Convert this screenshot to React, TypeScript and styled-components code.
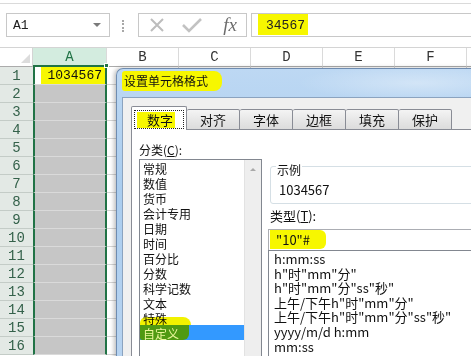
import React from "react";
import styled, { createGlobalStyle } from "styled-components";

const CJK = `"Noto Sans CJK SC", "Noto Sans", sans-serif`;
const MONO = `"Liberation Mono", "Noto Sans CJK SC", monospace`;
const GREEN = "#217346";

const GlobalStyle = createGlobalStyle`
  * { box-sizing: border-box; }
  html, body {
    margin: 0;
    padding: 0;
    background: #ffffff;
    overflow: hidden;
  }
`;

const Page = styled.div`
  width: 471px;
  height: 356px;
  overflow: hidden;
  background: #ffffff;
`;

/* ---------- formula bar ---------- */

const Toolbar = styled.div`
  margin-top: 3px;
  height: 45px;
  border-top: 1px solid #dadada;
  border-bottom: 1px solid #d4d4d4;
  display: flex;
  align-items: flex-start;
  padding-top: 9px;
`;

const NameBox = styled.div`
  margin-left: 6px;
  width: 104px;
  height: 24px;
  border: 1px solid #c8c8c8;
  display: flex;
  align-items: center;
  padding: 0 8px 0 6px;
  font: 13px ${MONO};
  color: #222;
`;

const Caret = styled.span`
  margin-left: auto;
  width: 0;
  height: 0;
  border-left: 4px solid transparent;
  border-right: 4px solid transparent;
  border-top: 4px solid #7a7a7a;
`;

const Grip = styled.div`
  margin: 7px 0 0 12px;
  width: 2px;
  height: 12px;
  border-left: 2px dotted #a8a8a8;
`;

const FxBox = styled.div`
  margin-left: 14px;
  width: 109px;
  height: 24px;
  border: 1px solid #c8c8c8;
  display: grid;
  grid-template-columns: repeat(3, 1fr);
  align-items: center;
  justify-items: center;
`;

const Fx = styled.span`
  font: italic 19px "Liberation Serif", "DejaVu Serif", serif;
  color: #6d6d6d;
  line-height: 22px;
  margin-left: 4px;
`;

const FormulaInput = styled.div`
  margin-left: 4px;
  flex: 1;
  height: 24px;
  border: 1px solid #c8c8c8;
  border-right: none;
  padding-left: 6px;
  display: flex;
  align-items: flex-start;
`;

const Mark = styled.span<{ $pad?: string }>`
  display: inline-block;
  background: #f7f700;
  padding: ${(p) => p.$pad || "0 4px"};
`;

const FormulaMark = styled(Mark)`
  font: 13px ${MONO};
  line-height: 18px;
  color: #222;
`;

/* ---------- sheet ---------- */

const Sheet = styled.div`
  position: relative;
  display: grid;
  grid-template-columns: 33px 74px repeat(6, 72px);
  grid-template-rows: 19px;
  grid-auto-rows: 18px;
`;

const Corner = styled.div`
  border-right: 1px solid #d4d4d4;
  border-bottom: 1px solid #ababab;
  display: flex;
  align-items: flex-end;
  justify-content: flex-end;
  padding: 0 2px 3px 0;
`;

const CornerTri = styled.span`
  width: 0;
  height: 0;
  border-left: 9px solid transparent;
  border-bottom: 9px solid #dcdcdc;
`;

const ColHead = styled.div<{ $active?: boolean }>`
  display: flex;
  align-items: center;
  justify-content: center;
  font: 14px ${MONO};
  color: ${(p) => (p.$active ? GREEN : "#333")};
  background: ${(p) => (p.$active ? "#d3ecdf" : "#ffffff")};
  border-right: 1px solid #dadada;
  border-bottom: ${(p) => (p.$active ? `2px solid ${GREEN}` : "1px solid #ababab")};
`;

const RowHead = styled.div`
  display: flex;
  align-items: center;
  justify-content: center;
  font: 14px ${MONO};
  color: #34614a;
  background: #e3e9e5;
  border-bottom: 1px solid #c4ccc7;
`;

const SelCell = styled.div<{ $first?: boolean }>`
  position: relative;
  display: flex;
  justify-content: flex-end;
  background: ${(p) => (p.$first ? "#ffffff" : "#c6c6c6")};
  border-left: 2px solid ${GREEN};
  border-right: 2px solid ${GREEN};
  border-bottom: 1px solid #dadada;
`;

const CellMark = styled(Mark)`
  font: 13px ${MONO};
  line-height: 17px;
  color: #111;
`;

const Handle = styled.span`
  position: absolute;
  right: -4px;
  top: -4px;
  width: 5px;
  height: 5px;
  background: ${GREEN};
  border: 1px solid #ffffff;
`;

const Cell = styled.div`
  border-right: 1px solid #d4d4d4;
  border-bottom: 1px solid #d4d4d4;
`;

/* ---------- dialog ---------- */

const Dialog = styled.div`
  position: absolute;
  left: 116px;
  top: 20px;
  width: 380px;
  height: 300px;
  border: 1px solid #6f8cb0;
  border-bottom: none;
  border-right: none;
  border-radius: 7px 0 0 0;
  background:
    radial-gradient(ellipse 120px 18px at 300px 14px, rgba(255, 255, 255, 0.35), transparent),
    linear-gradient(180deg, #bdd8f3 0%, #aacdef 40%, #b8d4f1 100%);
  box-shadow: -2px 0 4px rgba(0, 0, 0, 0.25);
  display: flex;
  flex-direction: column;
`;

const TitleBar = styled.div`
  height: 28px;
  padding: 2px 0 0 5px;
  display: flex;
  align-items: flex-start;
`;

const TitleMark = styled(Mark)`
  font: 12px ${CJK};
  line-height: 20px;
  color: #111;
  border-radius: 3px 8px 8px 3px;
`;

const Client = styled.div`
  flex: 1;
  margin-left: 5px;
  background: #f0f0f0;
  border-top: 1px solid #8ba3bf;
  border-left: 1px solid #8ba3bf;
  padding: 8px 0 0 8px;
  display: flex;
  flex-direction: column;
  overflow: hidden;
`;

const TabStrip = styled.div`
  height: 24px;
  display: flex;
  align-items: flex-end;
  position: relative;
  z-index: 1;
`;

const Tab = styled.div<{ $active?: boolean }>`
  height: ${(p) => (p.$active ? "24px" : "21px")};
  padding: ${(p) => (p.$active ? "3px 2px 1px" : "0 13px")};
  border: 1px solid #898c95;
  border-bottom: ${(p) => (p.$active ? "none" : "1px solid #898c95")};
  border-left: ${(p) => (p.$active ? "1px solid #898c95" : "none")};
  border-radius: 2px 2px 0 0;
  background: ${(p) =>
    p.$active ? "#ffffff" : "linear-gradient(180deg, #f4f4f4 0%, #e6e6e6 55%, #dcdcdc 100%)"};
  font: 13px ${CJK};
  line-height: 19px;
  color: #111;
  display: flex;
  justify-content: center;
`;

const FocusRing = styled.span`
  border: 1px dotted #222;
  padding: 1px 8px 0 2px;
  display: flex;
  align-items: center;
`;

const TabMark = styled(Mark)`
  line-height: 16px;
  padding: 0 2px 0 10px;
`;

const Panel = styled.div`
  flex: 1;
  margin-top: -1px;
  background: #ffffff;
  border: 1px solid #898c95;
  border-right: none;
  padding: 12px 0 0 7px;
  display: flex;
  align-items: flex-start;
  overflow: hidden;
`;

const LeftCol = styled.div`
  width: 123px;
  flex: none;
`;

const Label = styled.div<{ $size?: number }>`
  font: ${(p) => p.$size || 12}px ${CJK};
  line-height: ${(p) => (p.$size === 13 ? 14 : 15)}px;
  color: #111;
  white-space: nowrap;
`;

const ListBox = styled.div`
  margin-top: 2px;
  height: 220px;
  border: 1px solid #828790;
  display: flex;
`;

const Items = styled.div`
  flex: 1;
  padding-top: 0;
`;

const Item = styled.div<{ $selected?: boolean }>`
  height: 15px;
  line-height: 15px;
  padding-left: 3px;
  font: 12px ${CJK};
  white-space: nowrap;
  background: ${(p) => (p.$selected ? "#3399ff" : "transparent")};
  color: ${(p) => (p.$selected ? "#ffffff" : "#111")};
`;

const SelHighlight = styled.span`
  position: relative;
  display: inline-block;
  margin-left: -3px;
  padding: 0 10px 0 3px;
  height: 15px;
  background: #4f9a12;
  color: #eaf69a;
  border-radius: 0 0 6px 2px;

  &::before {
    content: "";
    position: absolute;
    left: 0;
    right: -2px;
    top: -8px;
    height: 8px;
    background: #f2f200;
    mix-blend-mode: multiply;
    border-radius: 6px 8px 0 0;
  }
`;

const ScrollBar = styled.div`
  width: 17px;
  background: #eeeeee;
  border-left: 1px solid #e2e2e2;
  display: flex;
  justify-content: center;
  padding-top: 8px;
`;

const UpArrow = styled.span`
  width: 0;
  height: 0;
  border-left: 3px solid transparent;
  border-right: 3px solid transparent;
  border-bottom: 3px solid #a9a9a9;
`;

const RightCol = styled.div`
  margin-left: 6px;
  width: 230px;
  flex: none;
`;

const GroupBox = styled.div`
  margin: 24px 0 0 2px;
  height: 38px;
  border: 1px solid #d5dfe5;
  border-radius: 3px;
  padding: 0 5px;
`;

const Legend = styled.div`
  width: fit-content;
  margin-top: -4px;
  padding: 0 1px;
  background: #ffffff;
  font: 12px ${CJK};
  line-height: 14px;
  color: #111;
`;

const Sample = styled.div`
  margin: 5px 0 0 3px;
  font: 13px ${CJK};
  line-height: 15px;
  color: #111;
`;

const TypeLabel = styled(Label)`
  margin: 5px 0 0 2px;
`;

const TypeInput = styled.div`
  margin-top: 6px;
  height: 22px;
  border: 1px solid #abadb3;
  border-right: none;
  padding-left: 1px;
  display: flex;
  align-items: flex-start;
`;

const InputMark = styled(Mark)`
  font: 13px ${CJK};
  line-height: 18px;
  color: #111;
  padding: 1px 16px 0 6px;
  border-radius: 0 6px 6px 0;
`;

const FormatList = styled.div`
  margin-top: -1px;
  height: 140px;
  border: 1px solid #828790;
  border-right: none;
  padding: 1px 0 0 5px;
`;

const FormatItem = styled.div`
  font: 13px ${CJK};
  line-height: 14.6px;
  color: #111;
  white-space: nowrap;
`;

const categories = [
  "常规",
  "数值",
  "货币",
  "会计专用",
  "日期",
  "时间",
  "百分比",
  "分数",
  "科学记数",
  "文本",
  "特殊",
  "自定义",
];

const formats = [
  'h:mm:ss',
  'h"时"mm"分"',
  'h"时"mm"分"ss"秒"',
  '上午/下午h"时"mm"分"',
  '上午/下午h"时"mm"分"ss"秒"',
  'yyyy/m/d h:mm',
  'mm:ss',
];

const tabs = ["数字", "对齐", "字体", "边框", "填充", "保护"];
const cols = ["A", "B", "C", "D", "E", "F", ""];
const rows = Array.from({ length: 16 }, (_, i) => i + 1);

const CloseIcon = () => (
  <svg width="16" height="16" viewBox="0 0 16 16">
    <path d="M2 2L14 14M14 2L2 14" stroke="#bdbdbd" strokeWidth="2" fill="none" />
  </svg>
);

const CheckIcon = () => (
  <svg width="20" height="16" viewBox="0 0 20 16">
    <path d="M1 8L7 14L19 2" stroke="#c2c2c2" strokeWidth="2.6" fill="none" />
  </svg>
);

export default function App() {
  return (
    <Page>
      <GlobalStyle />
      <Toolbar>
        <NameBox>
          A1
          <Caret />
        </NameBox>
        <Grip />
        <FxBox>
          <CloseIcon />
          <CheckIcon />
          <Fx>fx</Fx>
        </FxBox>
        <FormulaInput>
          <FormulaMark $pad="3px 3px 0 8px">34567</FormulaMark>
        </FormulaInput>
      </Toolbar>

      <Sheet>
        <Corner>
          <CornerTri />
        </Corner>
        {cols.map((c, i) => (
          <ColHead key={i} $active={c === "A"}>
            {c}
          </ColHead>
        ))}
        {rows.map((r) => (
          <React.Fragment key={r}>
            <RowHead>{r}</RowHead>
            <SelCell $first={r === 1}>
              {r === 1 && (
                <>
                  <CellMark $pad="0 3px 0 6px">1034567</CellMark>
                  <Handle />
                </>
              )}
            </SelCell>
            {cols.slice(1).map((c, i) => (
              <Cell key={i} />
            ))}
          </React.Fragment>
        ))}

        <Dialog>
          <TitleBar>
            <TitleMark $pad="0 14px 0 2px">设置单元格格式</TitleMark>
          </TitleBar>
          <Client>
            <TabStrip>
              {tabs.map((t, i) =>
                i === 0 ? (
                  <Tab key={t} $active>
                    <FocusRing>
                      <TabMark>{t}</TabMark>
                    </FocusRing>
                  </Tab>
                ) : (
                  <Tab key={t}>{t}</Tab>
                )
              )}
            </TabStrip>
            <Panel>
              <LeftCol>
                <Label>
                  分类(<u>C</u>):
                </Label>
                <ListBox>
                  <Items>
                    {categories.map((c) =>
                      c === "自定义" ? (
                        <Item key={c} $selected>
                          <SelHighlight>{c}</SelHighlight>
                        </Item>
                      ) : (
                        <Item key={c}>{c}</Item>
                      )
                    )}
                  </Items>
                  <ScrollBar>
                    <UpArrow />
                  </ScrollBar>
                </ListBox>
              </LeftCol>
              <RightCol>
                <GroupBox>
                  <Legend>示例</Legend>
                  <Sample>1034567</Sample>
                </GroupBox>
                <TypeLabel $size={13}>
                  类型(<u>T</u>):
                </TypeLabel>
                <TypeInput>
                  <InputMark>"10"#</InputMark>
                </TypeInput>
                <FormatList>
                  {formats.map((f) => (
                    <FormatItem key={f}>{f}</FormatItem>
                  ))}
                </FormatList>
              </RightCol>
            </Panel>
          </Client>
        </Dialog>
      </Sheet>
    </Page>
  );
}
